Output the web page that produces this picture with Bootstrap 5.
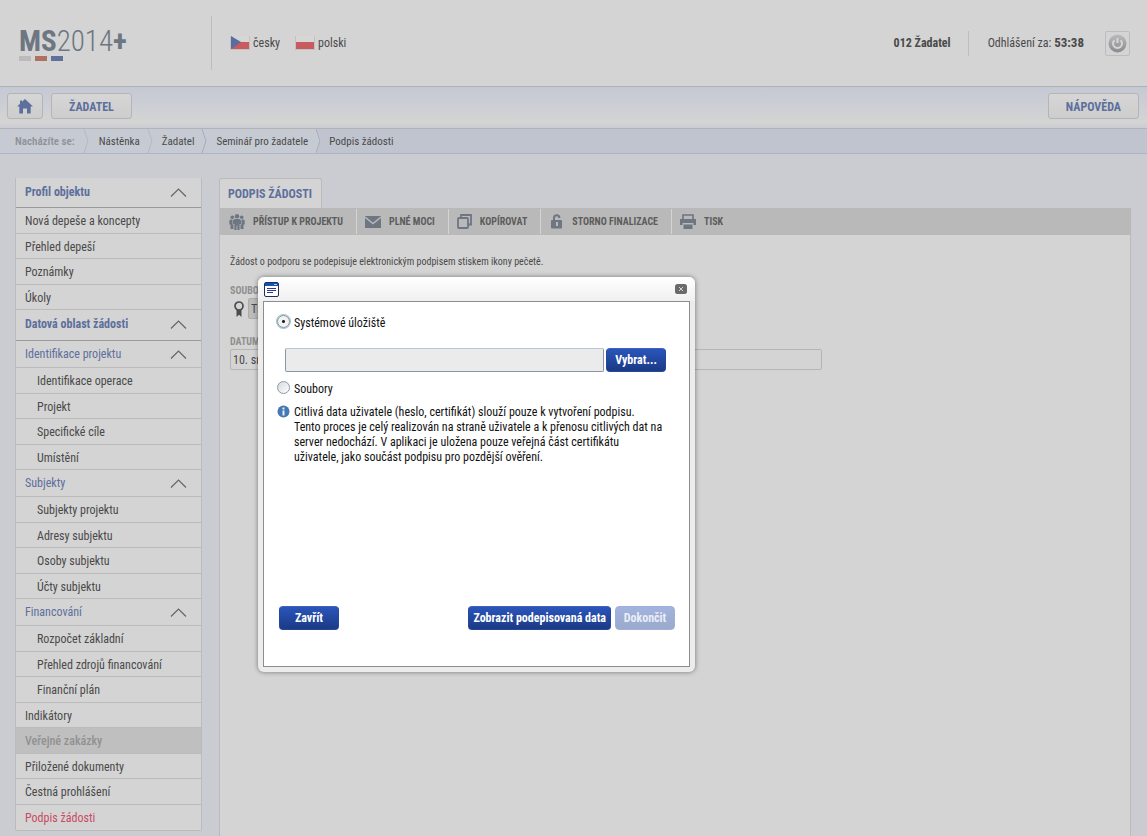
<!DOCTYPE html>
<html lang="cs">
<head>
<meta charset="utf-8">
<meta name="viewport" content="width=device-width, initial-scale=1">
<title>MS2014+ | Podpis žádosti</title>
<link href="https://cdn.jsdelivr.net/npm/bootstrap@5.3.0/dist/css/bootstrap.min.css" rel="stylesheet">
<script src="https://cdn.jsdelivr.net/npm/bootstrap@5.3.0/dist/js/bootstrap.bundle.min.js" defer></script>
<style>
:root{--surface:#d4d4d4;--line:#bbb;--ink:#4a4a4a;--blue:#5d6f9c;--slate:#6d7681}
body{font-family:"Roboto Condensed","Liberation Sans",sans-serif;font-size:12px;line-height:16px;color:var(--ink);background:#cbccd2}
a{color:inherit;text-decoration:none}
button{font-family:inherit}
.topbar{height:87px;background:var(--surface);border-bottom:1px solid #b0b0b0;padding:0 17px 0 19px}
.brand-area{width:193px;height:54px;border-right:1px solid #bdbdbd}
.logo-text{font-size:29px;line-height:29px;color:var(--slate);font-weight:300;margin-top:11px}
.logo-text b{font-weight:700}
.logo-bars i{width:12px;height:5px;display:block}
.lang{margin-left:18px;gap:15px}
.lang a{gap:3px}
.user-name{padding-right:17px;border-right:1px solid #bdbdbd;line-height:25px}
.time-left{padding:0 21px 0 19px}
.time-left b{font-size:13px}
.off-btn{width:25px;height:25px;border:1px solid #bdbdbd;border-radius:2px;background:var(--surface)}
.menubar{height:42px;padding:6px 8px 0 7px;background:linear-gradient(#c5c9d5,#d4d4d4 85%,#cbccd2);border-bottom:1px solid #b3b3b7}
.menu-btn{height:26px;padding:0 17px;border:1px solid #b5b5b8;border-radius:3px;background:linear-gradient(#d6d6d6,#cdcdcd);color:var(--blue);font-size:12px;font-weight:700;line-height:26px}
.home-btn{padding:0 8px}
.trail{height:25px;background:#bfc4cf;border-bottom:1px solid #b0b5c5;font-size:11px;line-height:25px}
.trail .steps{background:#c6cad3;padding-left:15px}
.trail svg{display:block;margin:0 9px 0 6px}
.trail .tail{margin:0 8px}
.trail .steps .tail{margin-right:0}
.layout{padding:24px 16px 0 15px;gap:17px}
.side{width:187px;flex:none;border:1px solid var(--line);border-top:0;border-radius:0 0 2px 2px;background:var(--surface);align-self:flex-start;font-size:12px}
.side ul{list-style:none;margin:0;padding:0}
.side li{height:26px;border-bottom:1px solid var(--line);padding-left:9px;line-height:26px}
.side li:nth-child(even){height:25px}
.side .sub li{padding-left:21px}
.side li.off{background:#bfbfbf;color:#919191;font-weight:500}
.side li.on{color:#c94a63}
.side .tail-list li{height:25px}
.side .tail-list li:nth-child(even){height:26px}
.side .tail-list li:last-child{border-bottom:0}
.side h2,.side h3{margin:0;font-size:12px;color:var(--blue);padding:0 14px 0 9px}
.side h2{height:31px;font-weight:700;border-bottom:1px solid #999;padding-bottom:1px}
.side h2:first-child{height:30px}
.side h3{height:27px;font-weight:400;border-bottom:1px solid var(--line)}
.pane{border:1px solid var(--line);border-top:0;border-bottom:0;background:var(--surface);min-height:calc(100vh - 208px)}
.tab{display:inline-block;height:30px;padding:0 9px 0 8px;border:1px solid var(--line);border-bottom:0;border-radius:3px 3px 0 0;background:var(--surface);font-size:12px;font-weight:700;line-height:31px;color:var(--blue)}
.tools{height:27px;background:#b9b9b9;margin-right:-1px;padding-left:1px;border-radius:0 2px 0 0}
.tools a{height:25px;font-size:10px;font-weight:700;color:#5c5c5c;border-right:1px solid #d4d4d4;line-height:25px;padding:0 13px 0 8px}
.tools a:last-child{border:0}
.tools svg{margin-right:8px}
.pane-body{padding:19px 10px}
.note{font-size:10px;margin:0 0 14px}
.cap{display:block;font-size:10px;font-weight:700;color:#8f8f8f;line-height:14px}
.field{border:1px solid #b5b5b5;border-radius:2px;background:var(--surface);color:var(--ink);height:21px;padding:0 2px;font-size:12px}
.doc-field{background:#bcbcbc;border-color:#acacac}
.date-field{width:592px;max-width:100%}
.dlg{position:absolute;left:258px;top:277px;width:437px;background:#ececec;border-radius:6px;box-shadow:0 0 5px rgba(0,0,0,.45);padding:0 5px 5px;font-size:12px;line-height:15px;color:#111}
.dlg-head{height:24px;margin:0 -5px;padding:0 8px 0 6px;border-radius:6px 6px 0 0;background:linear-gradient(#fff,#f0f0f0)}
.dlg-head button{padding:0;border:0;background:none;line-height:0}
.dlg-main{min-height:366px;border:1px solid #8d8d8d;background:#fff;padding:13px 13px 36px}
.choice{height:14px}
.choice label{line-height:12px;padding-top:2px}
.path-row{margin:19px 8px 9px;gap:2px}
.hint{margin-top:10px}
.dlg input[type=radio]{appearance:none;width:13px;height:13px;margin:0;flex:none;border:1px solid #8f99a3;border-radius:50%;background:linear-gradient(135deg,#d4d8de,#fff)}
.dlg input[type=radio]:checked{background:radial-gradient(circle,#222 0 1px,#f2f2f2 2px);border-color:#84939c;box-shadow:0 0 0 1px #9dc7d6}
.path-box{width:319px;height:24px;border:1px solid #8b96a3;border-top-color:#b9c6d2;border-radius:2px;background:#ebebeb;padding:0 4px}
.act{height:24px;min-width:60px;padding:0 4px;border:1px solid #2547a0;border-top-color:#3f63b8;border-radius:4px;background:linear-gradient(#2a55bb,#1b3a84);color:#fff;font-size:12px;font-weight:700;line-height:22px}
.act:disabled{border-color:#9fb0da;background:linear-gradient(#a2b3de,#9ba9cc);color:#e9edf6}
.dlg-foot{margin:auto 1px 0 2px}
</style>
</head>
<body>
<header class="topbar d-flex align-items-center">
  <div class="brand-area">
    <a href="#" class="d-block logo-text"><b>MS</b>2014<b>+</b></a>
    <div class="logo-bars d-flex gap-1"><i style="background:#bbb"></i><i style="background:#b07060"></i><i style="background:#5f709b"></i></div>
  </div>
  <nav class="lang d-flex align-items-center">
    <a href="#" class="d-flex align-items-center"><svg width="20" height="14"><path d="M0 0h20v14H0z" fill="#c2c2c2"/><path d="M1 0h18v6H1z" fill="#d6d6d6"/><path d="M1 6h18v7H1z" fill="#c75b60"/><path d="M1 0l10 6-10 7z" fill="#5b6c9f"/></svg>česky</a>
    <a href="#" class="d-flex align-items-center"><svg width="20" height="14"><path d="M0 0h20v14H0z" fill="#c2c2c2"/><path d="M1 0h18v6H1z" fill="#d6d6d6"/><path d="M1 6h18v7H1z" fill="#c75b60"/></svg>polski</a>
  </nav>
  <div class="d-flex align-items-center ms-auto">
    <strong class="user-name">012 Žadatel</strong>
    <span class="time-left">Odhlášení za: <b>53:38</b></span>
    <button class="off-btn p-0 d-flex align-items-center justify-content-center" aria-label="Odhlásit"><svg width="19" height="19" viewBox="0 0 19 19"><defs><linearGradient id="g" x2="0" y2="1"><stop stop-color="#bbb"/><stop offset="1" stop-color="#888b90"/></linearGradient></defs><circle cx="9.500" cy="9.500" r="9" fill="url(#g)"/><path d="M6.500 6.200a4.500 4.500 0 1 0 6 0M9.500 4v5" fill="none" stroke="#d6d6d6" stroke-width="2"/></svg></button>
  </div>
</header>
<nav class="menubar d-flex gap-2">
  <button class="menu-btn home-btn d-flex align-items-center" aria-label="Domů"><svg width="18" height="15" viewBox="0 0 18 15"><path d="M9 0l8 7.500h-2.300V14.500H11V9.500H7v5H3.300V7.500H1L4 4.800V1.500h2v1.300z" fill="#5d6f9c"/></svg></button>
  <button class="menu-btn">ŽADATEL</button>
  <button class="menu-btn ms-auto">NÁPOVĚDA</button>
</nav>
<nav class="trail d-flex" aria-label="Drobečková navigace">
  <div class="steps d-flex">
    <span class="fw-semibold" style="color:#8f9297">Nacházíte se:</span>
    <svg width="9" height="24"><path d="M3 0l4 12-4 12" fill="none" stroke="#b4b9c6"/></svg>
    <a href="#">Nástěnka</a>
    <svg width="7" height="24"><path d="M2 0l4 12-4 12" fill="none" stroke="#b4b9c6"/></svg>
    <a href="#">Žadatel</a>
    <svg width="7" height="24"><path d="M2 0l4 12-4 12" fill="none" stroke="#a8adbb"/></svg>
    <a href="#">Seminář pro žadatele</a>
    <svg class="tail" width="5" height="24"><path d="M5 0v24H1l4-12L1 0z" fill="#bfc4cf"/><path d="M0 0l4 12-4 12" fill="none" stroke="#a8adbb"/></svg>
  </div>
  <a href="#" class="ms-2">Podpis žádosti</a>
</nav>
<div class="layout d-flex">
  <nav class="side">
    <h2 class="d-flex align-items-center justify-content-between">Profil objektu <svg width="17" height="9"><path d="M1 8.500L8.500 1 16 8.500" fill="none" stroke="#666" stroke-width="1.200"/></svg></h2>
    <ul><li><a href="#">Nová depeše a koncepty</a></li><li><a href="#">Přehled depeší</a></li><li><a href="#">Poznámky</a></li><li><a href="#">Úkoly</a></li></ul>
    <h2 class="d-flex align-items-center justify-content-between">Datová oblast žádosti <svg width="17" height="9"><path d="M1 8.500L8.500 1 16 8.500" fill="none" stroke="#666" stroke-width="1.200"/></svg></h2>
    <h3 class="d-flex align-items-center justify-content-between">Identifikace projektu <svg width="17" height="9"><path d="M1 8.500L8.500 1 16 8.500" fill="none" stroke="#666" stroke-width="1.200"/></svg></h3>
    <ul class="sub"><li><a href="#">Identifikace operace</a></li><li><a href="#">Projekt</a></li><li><a href="#">Specifické cíle</a></li><li><a href="#">Umístění</a></li></ul>
    <h3 class="d-flex align-items-center justify-content-between">Subjekty <svg width="17" height="9"><path d="M1 8.500L8.500 1 16 8.500" fill="none" stroke="#666" stroke-width="1.200"/></svg></h3>
    <ul class="sub"><li><a href="#">Subjekty projektu</a></li><li><a href="#">Adresy subjektu</a></li><li><a href="#">Osoby subjektu</a></li><li><a href="#">Účty subjektu</a></li></ul>
    <h3 class="d-flex align-items-center justify-content-between">Financování <svg width="17" height="9"><path d="M1 8.500L8.500 1 16 8.500" fill="none" stroke="#666" stroke-width="1.200"/></svg></h3>
    <ul class="sub"><li><a href="#">Rozpočet základní</a></li><li><a href="#">Přehled zdrojů financování</a></li><li><a href="#">Finanční plán</a></li></ul>
    <ul class="tail-list"><li><a href="#">Indikátory</a></li><li class="off">Veřejné zakázky</li><li><a href="#">Přiložené dokumenty</a></li><li><a href="#">Čestná prohlášení</a></li><li class="on"><a href="#">Podpis žádosti</a></li></ul>
  </nav>
  <main class="flex-grow-1">
    <a href="#" class="tab">PODPIS ŽÁDOSTI</a>
    <div class="pane">
      <div class="tools d-flex align-items-center">
        <a href="#" class="d-flex align-items-center"><svg width="16" height="16" viewBox="0 0 16 16" fill="#6d7681"><circle cx="8" cy="2.200" r="2.200"/><circle cx="3.300" cy="3.200" r="1.800"/><circle cx="12.700" cy="3.200" r="1.800"/><path d="M5.500 5h5L12 6.500V10h-1.400v6H8.400v-4.500h-.8V16H5.400v-6H4V6.500zM1.500 5.500h2.200L3.500 6.500V10.500h1V15h-3v-4.500H.3V6.500zM14.500 5.500h-2.200l.2 1V10.500h-1V15h3v-4.500h1.200V6.500z"/></svg>PŘÍSTUP K PROJEKTU</a>
        <a href="#" class="d-flex align-items-center"><svg width="16" height="12" viewBox="0 0 16 12"><path d="M0 0h16v12H0z" fill="#6d7681"/><path d="M0 1l8 6.500L16 1" fill="none" stroke="#b9b9b9" stroke-width="1.400"/></svg>PLNÉ MOCI</a>
        <a href="#" class="d-flex align-items-center"><svg width="15" height="15" viewBox="0 0 15 15" fill="none" stroke="#6d7681" stroke-width="1.800"><path d="M4 3.500V1h10v9.500h-2.500"/><rect x="1" y="4" width="10" height="10" rx="1"/></svg>KOPÍROVAT</a>
        <a href="#" class="d-flex align-items-center"><svg width="15" height="15" viewBox="0 0 15 15"><path d="M5 7V4a2.700 2.700 0 0 1 5.400 0" fill="none" stroke="#6d7681" stroke-width="2"/><rect x="2" y="6" width="11" height="8.500" rx="1" fill="#6d7681"/><path d="M7 8h2v4H7z" fill="#b9b9b9"/></svg>STORNO FINALIZACE</a>
        <a href="#" class="d-flex align-items-center"><svg width="16" height="15" viewBox="0 0 16 15"><path d="M3 5V1h10v4" fill="none" stroke="#6d7681" stroke-width="1.600"/><path d="M0 5h16v6h-2.500V9h-11v2H0zM3.500 10.500h9V15h-9z" fill="#6d7681"/></svg>TISK</a>
      </div>
      <div class="pane-body">
        <p class="note">Žádost o podporu se podepisuje elektronickým podpisem stiskem ikony pečetě.</p>
        <label class="cap" for="doc">SOUBOR</label>
        <div class="d-flex align-items-center mb-3 gap-1"><svg class="ms-1" width="10" height="16" viewBox="0 0 10 16"><circle cx="5" cy="5" r="4" fill="none" stroke="#4c4c4c" stroke-width="1.700"/><path d="M2.500 8.800h5V16L5 13.800 2.500 16z" fill="#4c4c4c"/></svg><input id="doc" class="field doc-field" value="Tisk žádosti"></div>
        <label class="cap" for="date">DATUM PODPISU</label>
        <input id="date" class="field date-field d-block" value="10. srpna 2015">
      </div>
    </div>
  </main>
</div>
<section class="dlg" role="dialog" aria-label="Podpis">
  <div class="dlg-head d-flex align-items-center justify-content-between">
    <svg width="15" height="15" viewBox="0 0 15 15"><rect x=".5" y=".5" width="14" height="14" rx="1.500" fill="#fff" stroke="#1f2c5c"/><path d="M1 1h13v3H1z" fill="#1551b5"/><path d="M10 2.500h3" stroke="#9fd0ff"/><path d="M3 6.500h9M3 8.500h9M3 10.500h6" stroke="#2b3690"/></svg>
    <button aria-label="Zavřít okno"><svg width="12" height="10" viewBox="0 0 12 10"><rect width="12" height="10" rx="2.500" fill="#6a6a6a"/><path d="M4 3l4 4M8 3L4 7" stroke="#d4d4d4"/></svg></button>
  </div>
  <div class="dlg-main d-flex flex-column">
    <div class="choice d-flex gap-1"><input type="radio" name="store" id="r1" checked><label for="r1">Systémové úložiště</label></div>
    <div class="path-row d-flex"><input type="text" class="path-box" aria-label="Cesta" readonly><button class="act">Vybrat...</button></div>
    <div class="choice d-flex gap-1"><input type="radio" name="store" id="r2"><label for="r2">Soubory</label></div>
    <div class="hint d-flex gap-1"><svg class="flex-shrink-0" width="13" height="13"><circle cx="6.500" cy="6.500" r="6" fill="#4678b4"/><path d="M6.500 5.500v5M6.500 2.500v2" stroke="#e6eef8" stroke-width="2"/></svg>
    <p class="m-0">Citlivá data uživatele (heslo, certifikát) slouží pouze k vytvoření podpisu.<br>Tento proces je celý realizován na straně uživatele a k přenosu citlivých dat na<br>server nedochází. V aplikaci je uložena pouze veřejná část certifikátu<br>uživatele, jako součást podpisu pro pozdější ověření.</p></div>
    <div class="dlg-foot d-flex gap-1"><button class="act me-auto">Zavřít</button><button class="act">Zobrazit podepisovaná data</button><button class="act" disabled>Dokončit</button></div>
  </div>
</section>
</body>
</html>
